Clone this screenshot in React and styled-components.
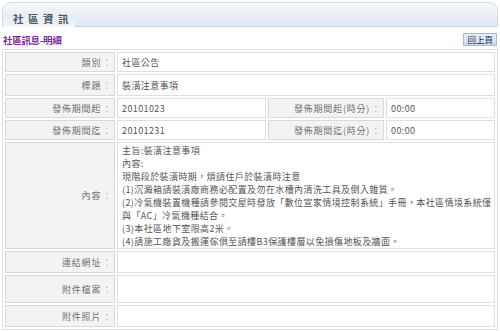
import React from "react";
import styled, { createGlobalStyle } from "styled-components";

const Global = createGlobalStyle`
  html, body { margin: 0; padding: 0; background: #fff; }
  body { font-family: "Noto Sans CJK TC", "Noto Sans", sans-serif; }
`;

const Page = styled.div`
  width: 500px;
  padding: 2px 2px 0 2px;
  box-sizing: border-box;
`;

const Header = styled.div`
  display: flex;
  height: 24px;
  border-radius: 9px 9px 0 0;
  background: linear-gradient(#f7f9fb, #e2eaf2 80%, #dfe8f1);
  border: 1px solid #d4dde6;
  border-bottom: none;
`;

const Tab = styled.div`
  width: 72px;
  display: flex;
  align-items: center;
  padding: 6px 0 0 10px;
  box-sizing: border-box;
  font-size: 10.5px;
  font-weight: bold;
  letter-spacing: 4.5px;
  white-space: nowrap;
  color: #4f5a66;
  background: linear-gradient(transparent 60%, #f4f7fa);
`;

const Filler = styled.div`
  flex: 1;
  border-bottom: 1px solid #c9d3dd;
`;

const SubBar = styled.div`
  display: flex;
  align-items: center;
  justify-content: space-between;
  height: 22px;
  padding: 3px 1px 0 1px;
  box-sizing: border-box;
`;

const SubTitle = styled.div`
  font-size: 9.5px;
  font-weight: bold;
  color: #7a2a9c;
  letter-spacing: -0.3px;
`;

const BackButton = styled.button`
  font-family: inherit;
  font-size: 8.5px;
  color: #1f2f44;
  background: linear-gradient(#e6eef7, #cddcec);
  border: 1px solid #a9bacd;
  padding: 0 3px;
  height: 13px;
  line-height: 11px;
  cursor: pointer;
`;

const Table = styled.table`
  width: 100%;
  border-collapse: separate;
  border-spacing: 2px;
  border: 1px solid #dcdcdc;
  table-layout: fixed;
`;

const Row = styled.tr`
  height: ${(p) => p.$h}px;
`;

const Label = styled.td`
  background: #f3f3f3;
  border: 1px solid #d9d9d9;
  color: #707070;
  font-size: 9px;
  text-align: right;
  padding: 0 2px 0 0;
  white-space: nowrap;
  letter-spacing: 0.8px;
  vertical-align: middle;
`;

const Colon = styled.span`
  color: #aaa;
  margin-left: 1px;
`;

const Value = styled.td`
  background: #fff;
  border: 1px solid #dfdfdf;
  color: #555;
  font-size: 9px;
  padding: 0 0 0 4px;
  vertical-align: ${(p) => (p.$top ? "top" : "middle")};
  letter-spacing: 0.4px;
  white-space: nowrap;
  overflow: hidden;
`;

const Lines = styled.div`
  padding-top: 1px;
  line-height: 13px;
`;

const Line = styled.div`
  white-space: nowrap;
`;

const content = [
  "主旨:裝潢注意事項",
  "內容:",
  "現階段於裝潢時期，煩請住戶於裝潢時注意",
  "(1)沉澱箱請裝潢廠商務必配置及勿在水槽內清洗工具及倒入雜質。",
  "(2)冷氣機裝置機種請參閱交屋時發放「數位宣家情境控制系統」手冊，本社區情境系統僅",
  "與「AC」冷氣機種結合。",
  "(3)本社區地下室限高2米。",
  "(4)請施工廠貨及搬運傢俱至請樓B3保護樓層以免損傷地板及牆面。",
];

const L = ({ children }) => (
  <Label>
    {children}
    <Colon>：</Colon>
  </Label>
);

export default function App() {
  return (
    <>
      <Global />
      <Page>
        <Header>
          <Tab>社區資訊</Tab>
          <Filler />
        </Header>
        <SubBar>
          <SubTitle>社區訊息-明細</SubTitle>
          <BackButton>回上頁</BackButton>
        </SubBar>
        <Table>
          <colgroup>
            <col style={{ width: "110px" }} />
            <col style={{ width: "149px" }} />
            <col style={{ width: "116px" }} />
            <col />
          </colgroup>
          <tbody>
            <Row $h={20}>
              <L>類別</L>
              <Value colSpan={3}>社區公告</Value>
            </Row>
            <Row $h={22}>
              <L>標題</L>
              <Value colSpan={3}>裝潢注意事項</Value>
            </Row>
            <Row $h={20}>
              <L>發佈期間起</L>
              <Value>20101023</Value>
              <L>發佈期間起(時分)</L>
              <Value>00:00</Value>
            </Row>
            <Row $h={20}>
              <L>發佈期間迄</L>
              <Value>20101231</Value>
              <L>發佈期間迄(時分)</L>
              <Value>00:00</Value>
            </Row>
            <Row $h={107}>
              <L>內容</L>
              <Value colSpan={3} $top>
                <Lines>
                  {content.map((t, i) => (
                    <Line key={i}>{t}</Line>
                  ))}
                </Lines>
              </Value>
            </Row>
            <Row $h={22}>
              <L>連結網址</L>
              <Value colSpan={3} />
            </Row>
            <Row $h={28}>
              <L>附件檔案</L>
              <Value colSpan={3} />
            </Row>
            <Row $h={22}>
              <L>附件照片</L>
              <Value colSpan={3} />
            </Row>
          </tbody>
        </Table>
      </Page>
    </>
  );
}
